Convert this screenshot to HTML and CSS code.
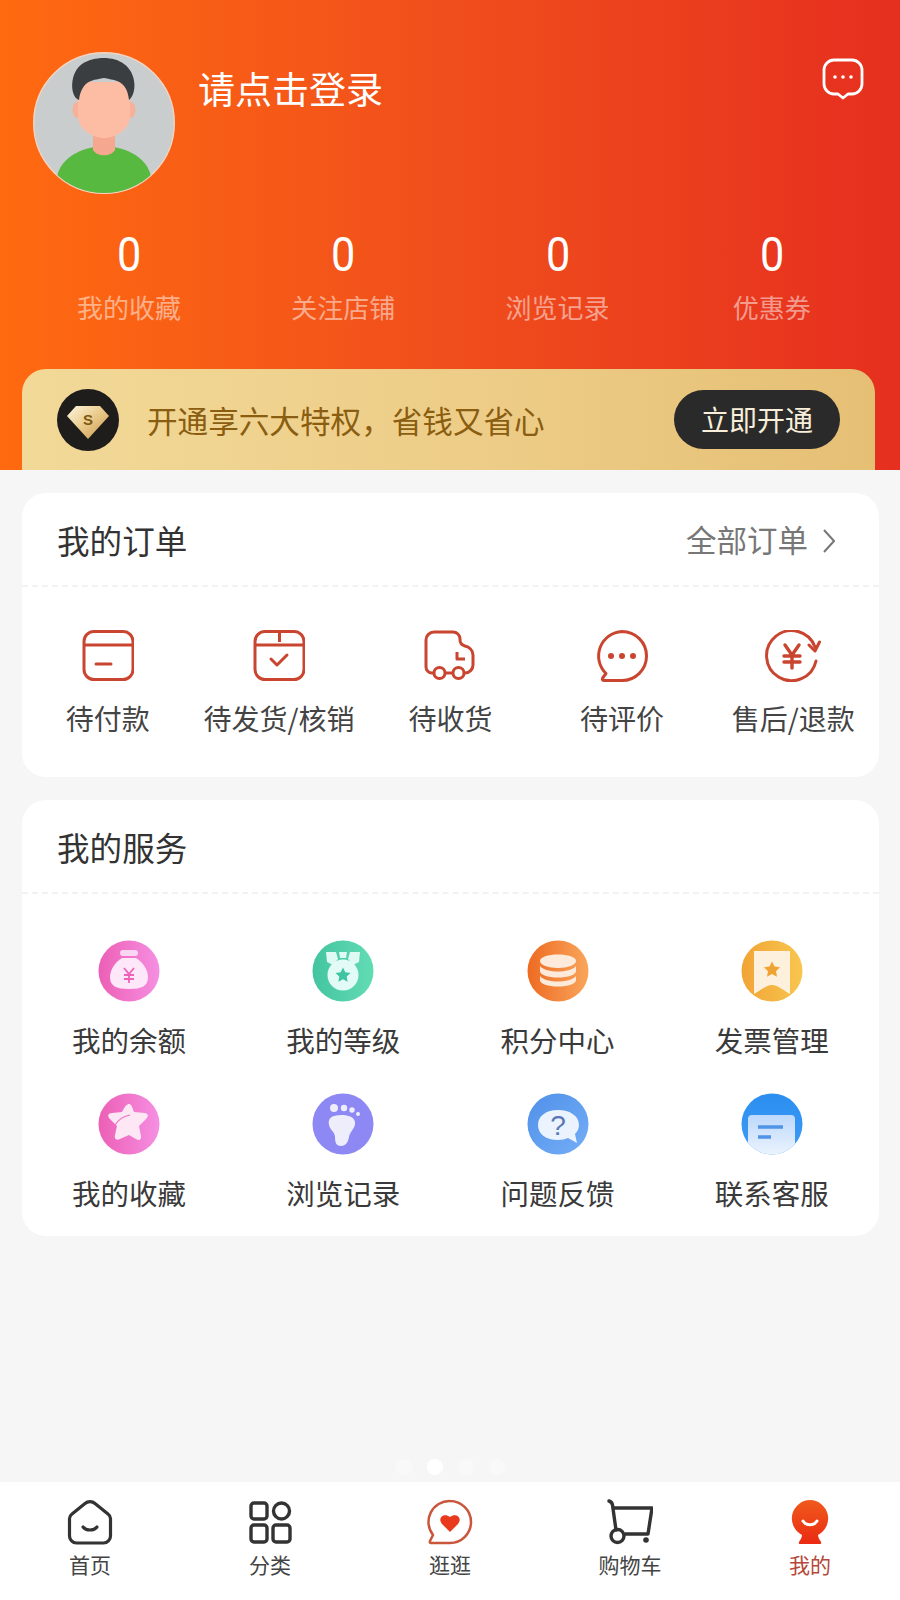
FILE: index.html
```html
<!DOCTYPE html>
<html lang="zh-CN">
<head>
  <meta charset="UTF-8">
  <meta name="viewport" content="width=device-width, initial-scale=1.0">
  <title>我的</title>
  <link rel="stylesheet" href="styles.css">
</head>
<body>
  <div class="page">
    <header class="hero">
      <div class="profile">
        <svg class="avatar" viewBox="0 0 142 142">
          <defs><clipPath id="avatarClip"><circle cx="71" cy="71" r="70"/></clipPath></defs>
          <circle cx="71" cy="71" r="70.300" fill="#cacdce" stroke="#f3d5c4" stroke-width="1.400"/>
          <g clip-path="url(#avatarClip)">
            <path d="M24 142v-17c3-18 22-28 38-30h18c16 2 35 12 38 30v17z" fill="#57b93f"/>
            <path d="M60 76h22v22c-4 7-18 7-22 0z" fill="#f6a78f"/>
            <ellipse cx="44" cy="58" rx="4.500" ry="8" fill="#f8b199"/>
            <ellipse cx="98" cy="58" rx="4.500" ry="8" fill="#f8b199"/>
            <path d="M45 30h52v34c0 12-13 22-26 22S45 76 45 64z" fill="#fdbda4"/>
            <path d="M46 48C36 44 37 20 49 12c12-8 32-8 42 0 13 9 13 30 5 36-1-9-4-16-12-19-6-2-9-2-13-3-4 1-8 1-13 3-8 3-11 11-12 19z" fill="#3b3e40"/>
          </g>
        </svg>
        <div class="login">请点击登录</div>
        <svg class="msg" viewBox="0 0 42 42" fill="none" stroke="#fff" stroke-width="2.800">
          <path d="M12 2h18a10 10 0 0 1 10 10v14a10 10 0 0 1-10 10h-4l-5 4-5-4h-4A10 10 0 0 1 2 26V12A10 10 0 0 1 12 2z" stroke-linejoin="round"/>
          <g fill="#fff" stroke="none"><circle cx="13" cy="19" r="1.800"/><circle cx="21" cy="19" r="1.800"/><circle cx="29" cy="19" r="1.800"/></g>
        </svg>
      </div>

      <div class="stats">
        <div class="stat"><div class="stat-num">0</div><div class="stat-label">我的收藏</div></div>
        <div class="stat"><div class="stat-num">0</div><div class="stat-label">关注店铺</div></div>
        <div class="stat"><div class="stat-num">0</div><div class="stat-label">浏览记录</div></div>
        <div class="stat"><div class="stat-num">0</div><div class="stat-label">优惠券</div></div>
      </div>

      <div class="vip">
        <svg class="vip-icon" viewBox="0 0 62 62">
          <defs>
            <linearGradient id="gem" x1="0" y1="0" x2="1" y2="1"><stop offset="0" stop-color="#fff6e2"/><stop offset="0.5" stop-color="#e9c988"/><stop offset="1" stop-color="#c8964a"/></linearGradient>
          </defs>
          <circle cx="31" cy="31" r="31" fill="#1f1d1c"/>
          <path d="M19 17h24l9 10-21 23-21-23z" fill="url(#gem)" stroke-linejoin="round"/>
          <text x="31" y="36" class="vip-s">S</text>
        </svg>
        <div class="vip-text">开通享六大特权，省钱又省心</div>
        <div class="vip-btn">立即开通</div>
      </div>
    </header>

    <section class="card card-orders">
      <div class="card-head">
        <div class="card-title">我的订单</div>
        <div class="card-more">全部订单
          <svg class="chevron" viewBox="0 0 12 24" fill="none" stroke="#777" stroke-width="2"><path d="M1 1l10 11L1 23"/></svg>
        </div>
      </div>
      <div class="orders">
        <div class="order">
          <svg viewBox="0 0 52 52" fill="none" stroke="#c9452f" stroke-width="3">
            <rect x="2" y="1.500" width="49" height="48" rx="10"/><path d="M2 15h49"/><path d="M14 34h15" stroke-linecap="round"/>
          </svg>
          <span>待付款</span>
        </div>
        <div class="order">
          <svg viewBox="0 0 52 52" fill="none" stroke="#c9452f" stroke-width="3">
            <rect x="2" y="1.500" width="49" height="48" rx="10"/><path d="M2 15h49M26.500 2v10"/><path d="M18 29l6 6 10-10" stroke-linecap="round" stroke-linejoin="round"/>
          </svg>
          <span>待发货/核销</span>
        </div>
        <div class="order">
          <svg viewBox="0 0 52 52" fill="none" stroke="#c9452f" stroke-width="3">
            <path d="M10 43H8a6 6 0 0 1-6-6V10a8 8 0 0 1 8-8h19a7 7 0 0 1 7 7v1c0 3 2 5 5 6 4 1 8 4 8 9v10a8 8 0 0 1-8 8h-1"/>
            <path d="M21 43h8"/><circle cx="15.500" cy="43" r="5.500"/><circle cx="34.500" cy="43" r="5.500"/>
            <path d="M33 22v7h8" stroke-linejoin="round"/>
          </svg>
          <span>待收货</span>
        </div>
        <div class="order">
          <svg viewBox="0 0 52 52" fill="none" stroke="#c9452f" stroke-width="3">
            <path d="M26 1.500a24.500 24.500 0 1 1 0 49H8c-2 0-2-1-1-3l3-4A24.500 24.500 0 0 1 26 1.500z" stroke-linejoin="round"/>
            <g fill="#c9452f" stroke="none"><circle cx="15" cy="26" r="3"/><circle cx="26" cy="26" r="3"/><circle cx="37" cy="26" r="3"/></g>
          </svg>
          <span>待评价</span>
        </div>
        <div class="order order-wide">
          <svg viewBox="0 0 56 52" fill="none" stroke="#c9452f" stroke-width="3">
            <path d="M51 31A25 25 0 1 1 50 17" stroke-linecap="round"/><path d="M54.500 12L50 21l-6-6" stroke-linecap="round" stroke-linejoin="round"/>
            <path d="M20 15l7 10 7-10M19 26h16M19 32h16M27 25v13" stroke-linecap="round" stroke-width="3.400"/>
          </svg>
          <span>售后/退款</span>
        </div>
      </div>
    </section>

    <section class="card card-services">
      <div class="card-head">
        <div class="card-title">我的服务</div>
      </div>
      <div class="services">
        <div class="service">
          <svg viewBox="0 0 62 62">
            <defs><linearGradient id="gPink" x1="0" y1="0.500" x2="1" y2="0.500"><stop offset="0" stop-color="#ec5fb5"/><stop offset="1" stop-color="#f68fe2"/></linearGradient></defs>
            <circle cx="31" cy="31" r="30.500" fill="url(#gPink)"/>
            <rect x="22" y="10" width="18" height="6" rx="3" fill="#fbd6f3"/>
            <path d="M24 18h14c7 4 12 12 12 19 0 9-6 12-19 12S12 46 12 37c0-7 5-15 12-19z" fill="#fde7f9"/>
            <path d="M26 28l5 6 5-6M26 35h10M26 39h10M31 34v9" fill="none" stroke="#ee62b8" stroke-width="1.800"/>
          </svg>
          <span>我的余额</span>
        </div>
        <div class="service">
          <svg viewBox="0 0 62 62">
            <defs><linearGradient id="gGreen" x1="0" y1="0.500" x2="1" y2="0.500"><stop offset="0" stop-color="#43c4a0"/><stop offset="1" stop-color="#62dcb4"/></linearGradient></defs>
            <circle cx="31" cy="31" r="30.500" fill="url(#gGreen)"/>
            <path d="M14 12h10l2 7-5 6-6-3zM27 12h8l-1 6h-6zM38 12h10l-1 10-6 3-5-6z" fill="#dff9f3"/>
            <circle cx="31" cy="35" r="15.500" fill="#e2fbf7"/>
            <path d="M31 27.500l2.300 4.700 5.200.7-3.800 3.600.9 5.200-4.600-2.500-4.600 2.500.9-5.200-3.800-3.600 5.200-.7z" fill="#3fc3a0"/>
          </svg>
          <span>我的等级</span>
        </div>
        <div class="service">
          <svg viewBox="0 0 62 62">
            <defs><linearGradient id="gOrange" x1="0" y1="0.500" x2="1" y2="0.500"><stop offset="0" stop-color="#ee6a22"/><stop offset="1" stop-color="#f9a65c"/></linearGradient></defs>
            <circle cx="31" cy="31" r="30.500" fill="url(#gOrange)"/>
            <g fill="#fdeadb">
              <path d="M13 21c0-4 8-6.500 18-6.500S49 17 49 21s-8 7-18 7-18-3-18-7z"/>
              <path d="M13 26c3 4 11 5.500 18 5.500S46 30 49 26v5c0 4-8 6.500-18 6.500S13 35 13 31z"/>
              <path d="M13 36c3 4 11 5.500 18 5.500S46 40 49 36v4c0 4-8 6.500-18 6.500S13 44 13 40z"/>
            </g>
          </svg>
          <span>积分中心</span>
        </div>
        <div class="service">
          <svg viewBox="0 0 62 62">
            <defs><linearGradient id="gYellow" x1="0" y1="0.500" x2="1" y2="0.500"><stop offset="0" stop-color="#f1a436"/><stop offset="1" stop-color="#f8c64f"/></linearGradient></defs>
            <circle cx="31" cy="31" r="30.500" fill="url(#gYellow)"/>
            <path d="M13 11h36v43c-6-3-12-9-18-9s-12 6-18 9z" fill="#fdf0dc"/>
            <path d="M31 21.500l2.500 5 5.500.8-4 3.900 1 5.500-5-2.600-5 2.600 1-5.500-4-3.900 5.500-.8z" fill="#f0a233"/>
          </svg>
          <span>发票管理</span>
        </div>
        <div class="service">
          <svg viewBox="0 0 62 62">
            <circle cx="31" cy="31" r="30.500" fill="url(#gPink)"/>
            <path d="M31 11c2 0 3 2 5 8l11 1c3 .5 4 3 1 6l-7 7 2 10c.5 4-2 5-5 3l-7-4-9 4c-4 2-6-.5-5-4l2-9-7-7c-3-3-2-6 2-6l10-1c3-6 5-8 7-8z" fill="#fde7f5"/>
            <path d="M17 32c4-6 9-9 15-10" fill="none" stroke="#ee6fbe" stroke-width="1.200"/>
          </svg>
          <span>我的收藏</span>
        </div>
        <div class="service">
          <svg viewBox="0 0 62 62">
            <circle cx="31" cy="31" r="30.500" fill="#8d88f3"/>
            <g fill="#eeedfb">
              <circle cx="22" cy="15" r="4"/><circle cx="32" cy="15" r="3.200"/><circle cx="40" cy="17" r="2.700"/><circle cx="46" cy="21" r="2"/>
              <path d="M22 23c8-2 20-1 21 6 1 6-5 9-6 15-1 6-4 9-8 9-5 0-6-4-6-9s-5-7-6-12c-1-5 1-8 5-9z"/>
            </g>
          </svg>
          <span>浏览记录</span>
        </div>
        <div class="service">
          <svg viewBox="0 0 62 62">
            <defs><linearGradient id="gBlue" x1="0" y1="0" x2="1" y2="1"><stop offset="0" stop-color="#4f90e8"/><stop offset="1" stop-color="#74aef7"/></linearGradient></defs>
            <circle cx="31" cy="31" r="30.500" fill="url(#gBlue)"/>
            <path d="M31 17c12 0 21 6 21 15 0 4-2 7-4 9l2 9-9-5c-3 1-6 2-10 2-12 0-20-6-20-15s8-15 20-15z" fill="#eaf3fe"/>
            <text x="31" y="42" class="help-mark">?</text>
          </svg>
          <span>问题反馈</span>
        </div>
        <div class="service">
          <svg viewBox="0 0 62 62">
            <defs>
              <linearGradient id="gKefu" x1="0" y1="0" x2="0" y2="1"><stop offset="0" stop-color="#2b8ff0"/><stop offset="1" stop-color="#3f9bf4"/></linearGradient>
              <linearGradient id="gKefu2" x1="0" y1="0" x2="0" y2="1"><stop offset="0" stop-color="#bcd8fb"/><stop offset="1" stop-color="#eef5fe"/></linearGradient>
              <clipPath id="kefuClip"><circle cx="31" cy="31" r="30.500"/></clipPath>
            </defs>
            <circle cx="31" cy="31" r="30.500" fill="url(#gKefu)"/>
            <g clip-path="url(#kefuClip)">
              <rect x="7" y="22" width="47" height="42" rx="4" fill="url(#gKefu2)"/>
              <path d="M17 34h25M17 44h13" stroke="#4f94e6" stroke-width="3.500"/>
            </g>
          </svg>
          <span>联系客服</span>
        </div>
      </div>
    </section>

    <div class="dots">
      <i class="dot"></i><i class="dot dot-on"></i><i class="dot"></i><i class="dot"></i>
    </div>

    <nav class="tabbar">
      <div class="tab">
        <svg viewBox="0 0 46 46" fill="none" stroke="#333" stroke-width="3.200">
          <path d="M18 4.500a7.500 7.500 0 0 1 10 0l13 10.500a6 6 0 0 1 2.500 4.500V37a7 7 0 0 1-7 7H9.500a7 7 0 0 1-7-7V19.500A6 6 0 0 1 5 15z" stroke-linejoin="round"/>
          <path d="M16 28c3 4 11 4 14 0" stroke-linecap="round"/>
        </svg>
        <span>首页</span>
      </div>
      <div class="tab">
        <svg viewBox="0 0 46 46" fill="none" stroke="#333" stroke-width="3.400">
          <rect x="4" y="4" width="16" height="16" rx="3"/><circle cx="34.500" cy="12" r="8"/>
          <rect x="4" y="26" width="16" height="17" rx="3"/><rect x="26" y="26" width="17" height="17" rx="3"/>
        </svg>
        <span>分类</span>
      </div>
      <div class="tab">
        <svg viewBox="0 0 46 46" fill="none" stroke="#c9553a" stroke-width="2.500">
          <path d="M23 2a21 21 0 1 1 0 42H4c-1 0-1.500-1-1-2l3-6A21 21 0 0 1 23 2z" stroke-linejoin="round"/>
          <path d="M23 33l-8-8c-5-6 2-12 8-7 6-5 13 1 8 7z" fill="#ea3a1e" stroke="none"/>
        </svg>
        <span>逛逛</span>
      </div>
      <div class="tab">
        <svg viewBox="0 0 46 46" fill="none" stroke="#333" stroke-width="3.400">
          <path d="M2 2c2 .5 3 1.500 3.500 4l3.500 25" stroke-linecap="round"/>
          <path d="M6 9h39l-4 26H18" stroke-linejoin="round"/>
          <circle cx="10.500" cy="37" r="6.500"/><circle cx="39" cy="41" r="2.800" fill="#333" stroke="none"/>
        </svg>
        <span>购物车</span>
      </div>
      <div class="tab tab-on">
        <svg viewBox="0 0 46 46">
          <defs><linearGradient id="gMine" x1="0.500" y1="0" x2="0.500" y2="1"><stop offset="0" stop-color="#f05a1c"/><stop offset="1" stop-color="#ea2a12"/></linearGradient></defs>
          <path d="M23 1a18.500 18.500 0 0 1 8 35c0 3 2 5 3 7 .5 1.500 0 2-1 2H13c-1 0-1.500-.5-1-2 1-2 3-4 3-7A18.500 18.500 0 0 1 23 1z" fill="url(#gMine)"/>
          <path d="M16 22c3 5 11 5 14 0" fill="none" stroke="#fff" stroke-width="3" stroke-linecap="round"/>
        </svg>
        <span>我的</span>
      </div>
    </nav>
  </div>
</body>
</html>
```

FILE: styles.css
```css
* {
  box-sizing: border-box;
}

body {
  margin: 0;
  background: #f6f6f6;
  font-family: "Noto Sans CJK SC", "Noto Sans", sans-serif;
  color: #333;
}

.page {
  display: flex;
  flex-direction: column;
  height: 1600px;
  overflow: hidden;
}

/* top orange block */
.hero {
  display: flex;
  flex-direction: column;
  height: 470px;
  padding-top: 52px;
  background: linear-gradient(90deg, #ff6a10, #f04e1c 50%, #e62f1f);
}

.profile {
  display: flex;
  align-items: flex-start;
  padding-left: 33px;
  padding-right: 36px;
}

.avatar {
  width: 142px;
  height: 142px;
  flex: none;
}

.login {
  margin-left: 23px;
  margin-top: 9px;
  font-size: 37px;
  line-height: 54px;
  color: #fff;
}

.msg {
  width: 42px;
  height: 42px;
  margin-left: auto;
  margin-top: 6px;
}

.stats {
  display: grid;
  grid-template-columns: repeat(4, 1fr);
  margin: 36px 21px 0 22px;
  text-align: center;
}

.stat-num {
  font-family: "Roboto", sans-serif;
  font-size: 48px;
  line-height: 50px;
  color: #fff;
  transform: scaleX(0.9);
}

.stat-label {
  margin-top: 9px;
  font-size: 26px;
  line-height: 36px;
  color: rgba(255, 255, 255, 0.5);
}

.vip {
  display: flex;
  align-items: center;
  height: 101px;
  margin: auto 25px 0 22px;
  padding: 0 35px;
  border-radius: 24px 24px 0 0;
  background: linear-gradient(90deg, #f2d998, #eccb85 60%, #e5bf74);
}

.vip-icon {
  width: 62px;
  height: 62px;
  flex: none;
}

.vip-s {
  font-family: "Liberation Sans", sans-serif;
  font-size: 15px;
  font-weight: bold;
  fill: #7d5a12;
  text-anchor: middle;
}

.vip-text {
  margin-left: 28px;
  font-size: 30.6px;
  color: #8a5d10;
}

.vip-btn {
  margin-left: auto;
  width: 166px;
  height: 59px;
  border-radius: 30px;
  background: #2a2a2a;
  color: #f8eeda;
  font-size: 28px;
  line-height: 59px;
  text-align: center;
}

/* white cards */
.card {
  margin: 23px 21px 0 22px;
  border-radius: 24px;
  background: #fff;
}

.card-orders {
  height: 284px;
}

.card-services {
  height: 436px;
}

.card-head {
  display: flex;
  align-items: center;
  justify-content: space-between;
  height: 94px;
  padding: 0 44px 0 35px;
  border-bottom: 2px dashed #f2f2f2;
}

.card-title {
  font-size: 32.6px;
  color: #333;
}

.card-more {
  display: flex;
  align-items: center;
  gap: 15px;
  font-size: 30.5px;
  color: #777;
}

.chevron {
  width: 12px;
  height: 24px;
  margin-top: 4px;
}

.orders {
  display: grid;
  grid-template-columns: repeat(5, 1fr);
  padding-top: 43px;
}

.order {
  display: flex;
  flex-direction: column;
  align-items: center;
  font-size: 28px;
  line-height: 40px;
  color: #444;
  white-space: nowrap;
}

.order svg {
  width: 52px;
  height: 52px;
  margin-bottom: 16px;
}

.order-wide svg {
  width: 56px;
}

.services {
  display: grid;
  grid-template-columns: repeat(4, 1fr);
  row-gap: 33px;
  padding-top: 46px;
}

.service {
  display: flex;
  flex-direction: column;
  align-items: center;
  font-size: 28.5px;
  line-height: 40px;
  color: #3a3a3a;
}

.service svg {
  width: 62px;
  height: 62px;
  margin-bottom: 18px;
}

.help-mark {
  font-family: "Liberation Sans", sans-serif;
  font-size: 28px;
  fill: #5a78b5;
  text-anchor: middle;
}

.dots {
  display: flex;
  justify-content: center;
  gap: 15px;
  margin-top: auto;
  margin-bottom: 7px;
}

.dot {
  width: 16px;
  height: 16px;
  border-radius: 50%;
  background: #f9f9f9;
}

.dot-on {
  background: #fff;
}

.tabbar {
  display: grid;
  grid-template-columns: repeat(5, 1fr);
  height: 118px;
  padding-top: 17px;
  background: #fff;
}

.tab {
  display: flex;
  flex-direction: column;
  align-items: center;
  font-size: 21px;
  line-height: 30px;
  color: #444;
}

.tab svg {
  width: 46px;
  height: 46px;
  margin-bottom: 4px;
}

.tab-on {
  color: #b5483a;
}
```
